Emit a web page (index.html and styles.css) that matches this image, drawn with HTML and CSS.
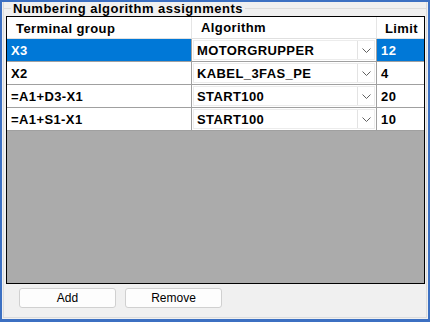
FILE: index.html
```html
<html>
	<head>
		<link rel="stylesheet" href="styles.css">
	</head>
	<body>
		<div class="window">
			<div class="group">
				<div class="legend">Numbering algorithm assignments</div>
				<div class="grid">
					<div class="row head">
						<div class="cell c1">Terminal group</div>
						<div class="cell c2">Algorithm</div>
						<div class="cell c3">Limit</div>
					</div>
					<div class="row selected">
						<div class="cell c1">X3</div>
						<div class="cell c2"><div class="combo"><span>MOTORGRUPPER</span><i class="arrow"><svg width="9" height="5" viewBox="0 0 9 5"><path d="M0.5 0.5 L4.5 4.5 L8.5 0.5" fill="none" stroke="#606060"/></svg></i></div></div>
						<div class="cell c3">12</div>
					</div>
					<div class="row">
						<div class="cell c1">X2</div>
						<div class="cell c2"><div class="combo"><span>KABEL_3FAS_PE</span><i class="arrow"><svg width="9" height="5" viewBox="0 0 9 5"><path d="M0.5 0.5 L4.5 4.5 L8.5 0.5" fill="none" stroke="#606060"/></svg></i></div></div>
						<div class="cell c3">4</div>
					</div>
					<div class="row">
						<div class="cell c1">=A1+D3-X1</div>
						<div class="cell c2"><div class="combo"><span>START100</span><i class="arrow"><svg width="9" height="5" viewBox="0 0 9 5"><path d="M0.5 0.5 L4.5 4.5 L8.5 0.5" fill="none" stroke="#606060"/></svg></i></div></div>
						<div class="cell c3">20</div>
					</div>
					<div class="row">
						<div class="cell c1">=A1+S1-X1</div>
						<div class="cell c2"><div class="combo"><span>START100</span><i class="arrow"><svg width="9" height="5" viewBox="0 0 9 5"><path d="M0.5 0.5 L4.5 4.5 L8.5 0.5" fill="none" stroke="#606060"/></svg></i></div></div>
						<div class="cell c3">10</div>
					</div>
				</div>
				<div class="buttons">
					<button class="btn">Add</button>
					<button class="btn">Remove</button>
				</div>
			</div>
		</div>
	</body>
</html>
```

FILE: styles.css
```css
* {
	box-sizing: border-box;
	padding: 0;
	margin: 0;
}
body {
	font-family: "Liberation Sans", Arial, sans-serif;
	font-size: 13px;
	letter-spacing: 0.4px;
	background-color: #f0f0f0;
}
.window {
	width: 430px;
	height: 322px;
	border: 2px solid #3c70c2;
	border-bottom-width: 3px;
	background-color: #f0f0f0;
	padding: 0 1px 1px 1px;
}
.group {
	position: relative;
	height: 100%;
	border: 1px solid #dcdcdc;
	border-top: none;
	padding: 14px 1px 0 2px;
}
.group::before {
	content: "";
	position: absolute;
	left: 0;
	right: 0;
	top: 6px;
	border-top: 1px solid #dcdcdc;
}
.legend {
	position: absolute;
	top: 0;
	left: 7px;
	padding: 0 2px 0 2px;
	background-color: #f0f0f0;
	font-weight: bold;
	line-height: 13px;
	letter-spacing: 0.5px;
	z-index: 1;
}
.grid {
	height: 268px;
	border: 1px solid #000;
	background-color: #ababab;
}
.row {
	display: flex;
	height: 23px;
	background-color: #fff;
	border-bottom: 1px solid #a0a0a0;
}
.row.head {
	height: 22px;
	border-bottom: 1px solid #e0e0e0;
}
.cell {
	display: flex;
	align-items: center;
	font-weight: bold;
	color: #000;
	border-right: 1px solid #a0a0a0;
	padding-left: 4px;
}
.head .cell {
	border-right-color: #e5e5e5;
	padding-left: 9px;
	padding-top: 1px;
}
.head .c3 {
	padding-left: 8px;
}
.c1 {
	width: 185px;
}
.c2 {
	width: 185px;
	padding: 1px;
}
.c3 {
	flex: 1;
	border-right: none;
}
.selected .c1,
.selected .c3 {
	background-color: #0078d7;
	color: #fff;
}
.combo {
	display: flex;
	width: 100%;
	height: 100%;
	border: 1px solid #ececec;
	background-color: #fff;
}
.combo span {
	flex: 1;
	display: flex;
	align-items: center;
	padding-left: 3px;
}
.arrow {
	width: 17px;
	display: flex;
	align-items: center;
	justify-content: center;
	border-left: 1px solid #e3e3e3;
}
.buttons {
	display: flex;
	gap: 9px;
	padding: 4px 0 0 13px;
}
.btn {
	width: 97px;
	height: 20px;
	font-family: "Liberation Sans", Arial, sans-serif;
	font-size: 12px;
	letter-spacing: 0;
	color: #000;
	background-color: #fdfdfd;
	border: 1px solid #d0d0d0;
	border-radius: 3px;
}
```
